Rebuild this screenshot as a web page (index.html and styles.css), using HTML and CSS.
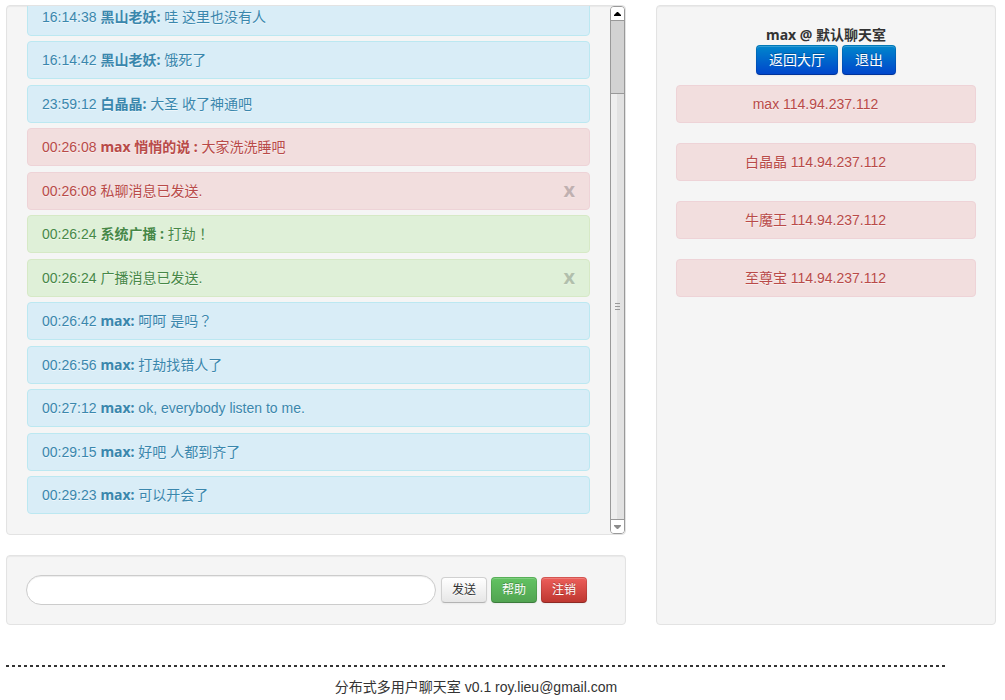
FILE: index.html
```
<!DOCTYPE html>
<html lang="zh-CN">
<head>
<meta charset="utf-8">
<title>默认聊天室</title>
<link rel="stylesheet" href="styles.css">
</head>
<body>
<main class="room">
  <section class="chat">
    <div class="well log">
      <div class="messages">
        <div class="alert info"><p>16:14:38 <strong>黑山老妖:</strong> 哇 这里也没有人</p></div>
        <div class="alert info"><p>16:14:42 <strong>黑山老妖:</strong> 饿死了</p></div>
        <div class="alert info"><p>23:59:12 <strong>白晶晶:</strong> 大圣 收了神通吧</p></div>
        <div class="alert error"><p>00:26:08 <strong>max 悄悄的说 :</strong> 大家洗洗睡吧</p></div>
        <div class="alert error"><p>00:26:08 私聊消息已发送.</p><button class="close" type="button">x</button></div>
        <div class="alert success"><p>00:26:24 <strong>系统广播 :</strong> 打劫<span class="mark" lang="zh-TW">！</span></p></div>
        <div class="alert success"><p>00:26:24 广播消息已发送.</p><button class="close" type="button">x</button></div>
        <div class="alert info"><p>00:26:42 <strong>max:</strong> 呵呵 是吗<span class="mark" lang="zh-TW">？</span></p></div>
        <div class="alert info"><p>00:26:56 <strong>max:</strong> 打劫找错人了</p></div>
        <div class="alert info"><p>00:27:12 <strong>max:</strong> ok, everybody listen to me.</p></div>
        <div class="alert info"><p>00:29:15 <strong>max:</strong> 好吧 人都到齐了</p></div>
        <div class="alert info"><p>00:29:23 <strong>max:</strong> 可以开会了</p></div>
      </div>
      <div class="scrollbar" aria-hidden="true">
        <div class="arrow up"><svg width="7" height="4" viewBox="0 0 7 4"><path d="M3 0h1l3 3v1H0V3z" fill="#000"/></svg></div>
        <div class="thumb"></div>
        <div class="track"><svg width="5" height="7" viewBox="0 0 5 7"><path d="M0 0h5v1H0zM0 3h5v1H0zM0 6h5v1H0z" fill="#999"/></svg></div>
        <div class="arrow down"><svg width="7" height="4" viewBox="0 0 7 4"><path d="M0 0h7v1L4 4H3L0 1z" fill="#8c8c8c"/></svg></div>
      </div>
    </div>
    <form class="well composer">
      <input class="message" type="text" aria-label="消息">
      <div class="actions">
        <button class="btn small" type="button">发送</button>
        <button class="btn small green" type="button">帮助</button>
        <button class="btn small red" type="button">注销</button>
      </div>
    </form>
  </section>
  <aside class="well people">
    <strong>max @ 默认聊天室</strong>
    <div class="actions">
      <button class="btn blue" type="button">返回大厅</button>
      <button class="btn blue" type="button">退出</button>
    </div>
    <div class="users">
      <div class="alert error">max 114.94.237.112</div>
      <div class="alert error">白晶晶 114.94.237.112</div>
      <div class="alert error">牛魔王 114.94.237.112</div>
      <div class="alert error">至尊宝 114.94.237.112</div>
    </div>
  </aside>
</main>
<footer class="footer">分布式多用户聊天室 v0.1 roy.lieu@gmail.com</footer>
</body>
</html>
```
FILE: styles.css
```
* { box-sizing: border-box; }

body {
  display: flex;
  flex-direction: column;
  height: 100vh;
  margin: 0;
  padding: 5px 9px 3px 6px;
  background: #fff;
  color: #333;
  font: 14px/20px "Liberation Sans", "Noto Sans CJK SC", sans-serif;
}

p { margin: 0; }
strong { font-family: "Noto Sans", "Noto Sans CJK SC", sans-serif; }
.mark { font-family: "Noto Sans CJK TC", sans-serif; line-height: 1; }

.room {
  flex: 1;
  min-height: 0;
  display: grid;
  grid-template-columns: 62fr 34fr;
  gap: 30px;
}

.chat {
  display: flex;
  flex-direction: column;
  gap: 20px;
  min-width: 0;
  min-height: 0;
}

.well {
  background: #f5f5f5;
  border: 1px solid #e3e3e3;
  border-radius: 4px;
  box-shadow: inset 0 1px 1px rgba(0, 0, 0, .05);
}

.log {
  flex: 1;
  min-height: 0;
  display: flex;
  overflow: hidden;
}

.messages {
  flex: 1;
  display: flex;
  flex-direction: column;
  justify-content: flex-end;
  padding: 0 20px 20px;
}

.alert {
  flex: none;
  padding: 8px 14px;
  border: 1px solid;
  border-radius: 4px;
  text-shadow: 0 1px 0 rgba(255, 255, 255, .5);
}
.messages .alert {
  display: flex;
  justify-content: space-between;
  align-items: flex-start;
}
.messages .alert:nth-child(odd) { margin-bottom: 5px; }
.messages .alert:nth-child(even) { margin-bottom: 6px; }
.messages .alert:last-child { margin-bottom: 0; }

.info { color: #3a87ad; background: #d9edf7; border-color: #bce8f1; }
.error { color: #b94a48; background: #f2dede; border-color: #eed3d7; }
.success { color: #468847; background: #dff0d8; border-color: #d6e9c6; }

.close {
  padding: 0;
  border: 0;
  background: none;
  color: #000;
  font: bold 20px/18px "Noto Sans", sans-serif;
  text-shadow: 0 1px 0 #fff;
  opacity: .2;
}

.scrollbar {
  flex: none;
  width: 15px;
  display: flex;
  flex-direction: column;
  border: 1px solid #999;
  border-radius: 4px;
  overflow: hidden;
}
.arrow {
  height: 13px;
  display: flex;
  align-items: center;
  justify-content: center;
  background: #fff;
}
.thumb {
  height: 74px;
  background: #d2d2d2;
  border: solid #999;
  border-width: 1px 0;
}
.track {
  flex: 1;
  display: flex;
  align-items: center;
  justify-content: center;
  background: linear-gradient(to right, #eee 50%, #e2e2e2 50%);
  border-bottom: 1px solid #999;
}

.composer {
  display: flex;
  align-items: center;
  gap: 5px;
  padding: 19px;
}
.message {
  flex: 0 1 410px;
  min-width: 0;
  height: 30px;
  padding: 4px 14px;
  border: 1px solid #ccc;
  border-radius: 15px;
  background: #fff;
  box-shadow: inset 0 1px 1px rgba(0, 0, 0, .075);
  font: inherit;
}

.actions { display: flex; gap: 4px; }

.btn {
  padding: 4px 12px;
  border: 1px solid #ccc;
  border-color: #d0d0d0 #d0d0d0 #b3b3b3;
  border-radius: 4px;
  background: linear-gradient(#fff, #e6e6e6);
  box-shadow: inset 0 1px 0 rgba(255, 255, 255, .2), 0 1px 2px rgba(0, 0, 0, .05);
  color: #333;
  font: inherit;
  text-shadow: 0 1px 1px rgba(255, 255, 255, .75);
}
.small { padding: 2px 10px; font-size: 12px; }
.blue, .green, .red {
  border-color: rgba(0, 0, 0, .1) rgba(0, 0, 0, .1) rgba(0, 0, 0, .25);
  background-origin: border-box;
  color: #fff;
  text-shadow: 0 -1px 0 rgba(0, 0, 0, .25);
}
.blue { background-image: linear-gradient(#08c, #04c); }
.green { background-image: linear-gradient(#62c462, #51a351); }
.red { background-image: linear-gradient(#ee5f5b, #bd362f); }

.people {
  display: flex;
  flex-direction: column;
  align-items: center;
  padding: 19px;
}
.users {
  align-self: stretch;
  display: grid;
  gap: 20px;
  margin-top: 10px;
  text-align: center;
}
.users .alert { padding-right: 35px; }

.footer {
  flex: none;
  margin: 40px 50px 0 0;
  padding-top: 12px;
  background: repeating-linear-gradient(to right, #333 0 3px, transparent 3px 6px) top / 100% 2px no-repeat;
  text-align: center;
}
```
